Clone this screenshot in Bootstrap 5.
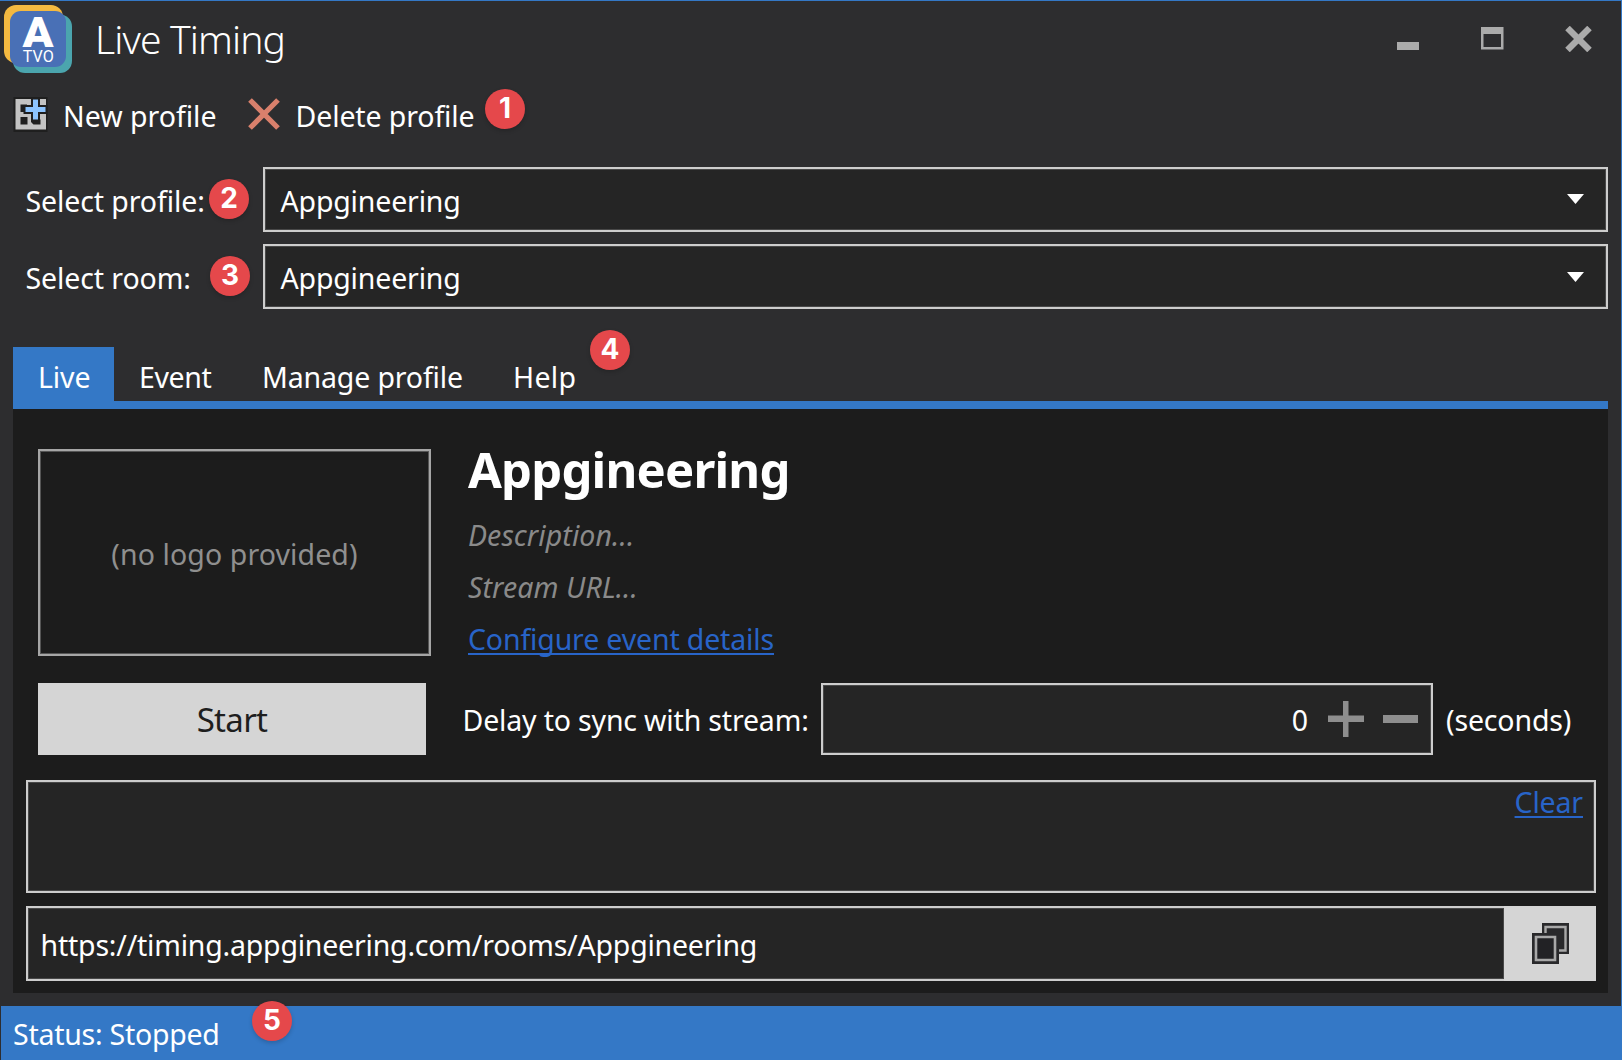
<!DOCTYPE html>
<html lang="en">
<head>
<meta charset="utf-8">
<meta name="viewport" content="width=device-width, initial-scale=1">
<title>Live Timing</title>
<link rel="stylesheet" href="https://cdn.jsdelivr.net/npm/bootstrap@5.3.0/dist/css/bootstrap.min.css">
<script src="https://cdn.jsdelivr.net/npm/bootstrap@5.3.0/dist/js/bootstrap.bundle.min.js"></script>
<style>
  :root { --accent: #3478c6; --chrome: #2d2d2f; --panel: #1c1c1c; --field: #252525; --line: #cdcdcd; }
  body { background: var(--chrome); color: #fff; font-family: "Noto Sans", "Open Sans", sans-serif; font-size: 28.5px; line-height: 40px; overflow: hidden; }
  .app-window { height: 1060px; border-top: 1px solid var(--accent); border-right: 1px solid var(--accent); white-space: nowrap; }
  svg { display: block; flex: none; }

  .title-bar { height: 84px; padding-left: 4px; }
  .app-logo { margin-top: 3px; }
  .app-title { font-size: 39px; font-weight: 300; letter-spacing: -.85px; margin: 0 0 8px 22px; line-height: 50px; }
  .window-buttons { margin-bottom: 9px; margin-right: 29px; }
  .window-buttons .btn, .spin-btn { padding: 0; border: 0; border-radius: 0; }
  .spin-btn { margin-left: 19px; }

  .tool-bar { height: 62px; padding-left: 13px; }
  .tool-btn { color: #fff; font-size: inherit; line-height: inherit; padding: 0; border: 0; }
  .tool-btn:hover { color: #fff; }
  .tool-btn span { margin: 11px 0 0 15px; }
  .new-icon { margin-top: 11px; }
  .delete-icon { margin: 13px 0 0 31px; }
  .delete-btn { letter-spacing: -.12px; }

  .field-row { height: 65px; padding-right: 13px; }
  .field-profile { margin-top: 20px; }
  .field-room { margin-top: 12px; }
  .field-label { width: 263px; padding-left: 25.5px; padding-top: 3px; letter-spacing: -.1px; }
  .combo { background: var(--field); border: 2px solid var(--line); border-radius: 0; color: #fff; font-size: inherit; line-height: inherit; padding: 3px 22px 0 15.5px; letter-spacing: -.17px; box-shadow: inset 0 0 0 1px #484848; text-align: left; }
  .combo:hover { color: #fff; background: var(--field); border-color: #fff; }
  .combo svg { margin-bottom: 4px; }
  .field-room .combo svg { margin-bottom: 2px; }

  .tab-strip { margin: 38px 13px 0 13px; height: 62px; border-bottom: 8px solid var(--accent); }
  .tab-strip .nav-link { color: #fff; border: 0; border-radius: 0; height: 54px; padding: 10px 0 0 25px; line-height: 40px; letter-spacing: -.1px; }
  .tab-strip .nav-link.active { background: var(--accent); color: #fff; width: 101px; }
  .tab-strip .tab-event { width: 123px; letter-spacing: -.4px; }
  .tab-strip .tab-manage { width: 251px; letter-spacing: -.15px; }
  .tab-strip .tab-help { letter-spacing: .3px; }

  .live-panel { background: var(--panel); margin: 0 13px; height: 584px; padding: 40px 12px 12px 13px; }
  .logo-box { width: 393px; height: 207px; margin-left: 12px; border: 2px solid #a6a6a6; box-shadow: inset 0 0 0 1px #555; color: #8f8f8f; letter-spacing: .1px; padding-top: 3px; }
  .event-info { padding-left: 37px; margin-bottom: -4px; }
  .event-name { font-size: 49px; font-weight: 700; letter-spacing: -.8px; line-height: 56px; margin: -8px 0 18px; }
  .ghost { color: #8a8a8a; font-style: italic; letter-spacing: .1px; margin-bottom: 12px; }
  .app-link { color: #2864c8; text-decoration: underline; text-decoration-thickness: 2px; text-underline-offset: 3px; text-decoration-skip-ink: none; letter-spacing: -.15px; }
  .run-row { margin-top: 27px; }
  .start-btn { width: 388px; height: 72px; margin-left: 12px; border: 0; border-radius: 0; background: #d5d5d5; color: #1e1e1e; font-size: 33px; letter-spacing: -.7px; padding: 2px 0 0; }
  .start-btn:hover { background: #e2e2e2; color: #1e1e1e; }
  .delay-box { width: 612px; height: 72px; background: var(--field); border: 2px solid var(--line); box-shadow: inset 0 0 0 1px #484848; padding-right: 13px; }
  .delay-value { margin-right: 1px; padding-top: 2px; }
  .delay-label { padding-left: 36.5px; width: 395px; letter-spacing: -.17px; padding-top: 2px; }
  .delay-unit { margin-left: 13px; padding-top: 2px; letter-spacing: -.15px; }
  .log-box { height: 113px; background: var(--field); border: 2px solid var(--line); box-shadow: inset 0 0 0 1px #484848; margin-top: 25px; padding: 0 11px; }
  .url-row { height: 75px; margin-top: 13px; }
  .url-field { background: var(--field) !important; color: #fff !important; border: 2px solid var(--line); border-radius: 0; border-right: 0; font-size: inherit; letter-spacing: -.21px; padding: 3px 0 0 12.5px; box-shadow: inset 0 0 0 1px #484848 !important; }
  .copy-btn { width: 92px; background: #d5d5d5; border: 0; border-radius: 0; padding: 0 0 1px; }
  .copy-btn:hover { background: #e2e2e2; }

  .status-bar { background: var(--accent); height: 54px; margin: 13px 0 0 1px; padding: 8px 0 0 12px; letter-spacing: -.25px; }

  .marker { position: absolute; width: 40px; height: 40px; border-radius: 50%; background: #e5484b; color: #fff; font: 700 28px/39px Inter, sans-serif; text-align: center; box-shadow: 0 2px 4px rgba(0,0,0,.18); }
  .marker-1 { left: 485px; top: 88px; }
  .marker-2 { left: 209px; top: 178px; }
  .marker-3 { left: 210px; top: 255px; }
  .marker-4 { left: 590px; top: 329px; }
  .marker-5 { left: 252px; top: 1000px; }
</style>
</head>
<body>
<div class="app-window d-flex flex-column position-relative">

  <header class="title-bar d-flex align-items-center">
    <svg class="app-logo align-self-start" width="69" height="70" viewBox="4 4 69 70">
      <rect x="4" y="5" width="59" height="58" rx="12" fill="#f4b940"/>
      <rect x="13" y="14.500" width="59" height="58.500" rx="12" fill="#4ba5ae"/>
      <rect x="10" y="11" width="56" height="56" rx="11" fill="#4970b6"/>
      <text x="38" y="47" text-anchor="middle" font-family="Roboto, sans-serif" font-weight="900" font-size="43" textLength="31" lengthAdjust="spacingAndGlyphs" fill="#fff">A</text>
      <text x="38.300" y="62" text-anchor="middle" font-family="Roboto, sans-serif" font-size="17" textLength="31" lengthAdjust="spacingAndGlyphs" fill="#fff">TVO</text>
    </svg>
    <h1 class="app-title">Live Timing</h1>
    <div class="window-buttons d-flex ms-auto">
      <button class="btn" aria-label="Minimize"><svg width="84" height="26" viewBox="0 0 84 26"><path d="M0 16h22v8H0z" fill="#ababab"/></svg></button>
      <button class="btn" aria-label="Maximize"><svg width="84" height="26" viewBox="0 0 84 26"><path d="M0 1h22.500v22.500H0zM2.500 8v13H20V8z" fill="#ababab" fill-rule="evenodd"/></svg></button>
      <button class="btn" aria-label="Close"><svg width="27" height="26" viewBox="0 0 27 26"><path d="M2.500 2l22 22M24.500 2L2.500 24" stroke="#ababab" stroke-width="6.400" fill="none"/></svg></button>
    </div>
  </header>

  <div class="tool-bar d-flex align-items-start">
    <button class="btn tool-btn d-flex">
      <svg class="new-icon" width="35" height="36" viewBox="13 96 35 36">
        <path d="M13.500 97h34v35h-34z" fill="#1f1f1f"/>
        <path d="M15.500 99H46v30.500H15.500z" fill="#c3c3c3"/>
        <path d="M20.500 104.500H27v7.500h-6.500zM20.500 117h7v7.500h-7zM31 119.500h9.500v5H33.500l-2.500-2.500z" fill="#1f1f1f"/>
        <path d="M33 99.500h5v7.500h7.500v5H38v7.500h-5V112h-7.500v-5H33z" fill="#8cc4ff" stroke="#1f1f1f" stroke-width="4" paint-order="stroke"/>
      </svg>
      <span>New profile</span>
    </button>
    <button class="btn tool-btn delete-btn d-flex">
      <svg class="delete-icon" width="32" height="32" viewBox="0 0 32 32"><path d="M2 2l28 28M30 2L2 30" stroke="#d9806c" stroke-width="5.200" fill="none"/></svg>
      <span class="ms-3">Delete profile</span>
    </button>
  </div>

  <div class="field-row field-profile d-flex align-items-stretch">
    <label class="field-label d-flex align-items-center">Select profile:</label>
    <button class="btn combo flex-grow-1 d-flex align-items-center justify-content-between">Appgineering
      <svg width="17" height="10" viewBox="0 0 17 10"><path d="M0 0h17L8.500 10z" fill="#fff"/></svg></button>
  </div>
  <div class="field-row field-room d-flex align-items-stretch">
    <label class="field-label d-flex align-items-center">Select room:</label>
    <button class="btn combo flex-grow-1 d-flex align-items-center justify-content-between">Appgineering
      <svg width="17" height="10" viewBox="0 0 17 10"><path d="M0 0h17L8.500 10z" fill="#fff"/></svg></button>
  </div>

  <nav class="nav tab-strip">
    <a class="nav-link active" href="#">Live</a>
    <a class="nav-link tab-event" href="#">Event</a>
    <a class="nav-link tab-manage" href="#">Manage profile</a>
    <a class="nav-link tab-help" href="#">Help</a>
  </nav>

  <main class="live-panel d-flex flex-column">
    <div class="d-flex align-items-start">
      <div class="logo-box d-flex align-items-center justify-content-center">(no logo provided)</div>
      <div class="event-info">
        <h2 class="event-name">Appgineering</h2>
        <div class="ghost">Description...</div>
        <div class="ghost">Stream URL...</div>
        <div><a class="app-link" href="#">Configure event details</a></div>
      </div>
    </div>

    <div class="run-row d-flex align-items-center">
      <button class="btn start-btn">Start</button>
      <div class="delay-label">Delay to sync with stream:</div>
      <div class="delay-box d-flex align-items-center justify-content-end">
        <span class="delay-value">0</span>
        <button class="btn spin-btn" aria-label="Increase"><svg width="36" height="36" viewBox="0 0 36 36"><path d="M0 14.500h15V0h5.500v14.500H36v6.500H20.500v15H15v-15H0z" fill="#8e8e8e"/></svg></button>
        <button class="btn spin-btn" aria-label="Decrease"><svg width="35" height="36" viewBox="0 0 35 36"><path d="M0 14h35v8H0z" fill="#8e8e8e"/></svg></button>
      </div>
      <div class="delay-unit">(seconds)</div>
    </div>

    <div class="log-box d-flex justify-content-end align-items-start"><a class="app-link" href="#">Clear</a></div>

    <div class="url-row d-flex">
      <input class="form-control url-field flex-grow-1" type="text" value="https://timing.appgineering.com/rooms/Appgineering" aria-label="Room address">
      <button class="btn copy-btn d-flex align-items-center justify-content-center flex-shrink-0" aria-label="Copy">
        <svg width="37" height="41" viewBox="0 0 37 41">
          <path d="M10 0h27v31H10z" fill="#29292b"/><path d="M13.500 4h20v23.500h-20z" fill="#29292b" stroke="#a8a8a8" stroke-width="2.400"/>
          <path d="M0 10h27v31H0z" fill="#29292b"/><path d="M4 14h19v23H4z" fill="#222225" stroke="#a8a8a8" stroke-width="2.600"/>
        </svg>
      </button>
    </div>
  </main>

  <footer class="status-bar">Status: Stopped</footer>

  <span class="marker marker-1">1</span>
  <span class="marker marker-2">2</span>
  <span class="marker marker-3">3</span>
  <span class="marker marker-4">4</span>
  <span class="marker marker-5">5</span>
</div>
</body>
</html>
